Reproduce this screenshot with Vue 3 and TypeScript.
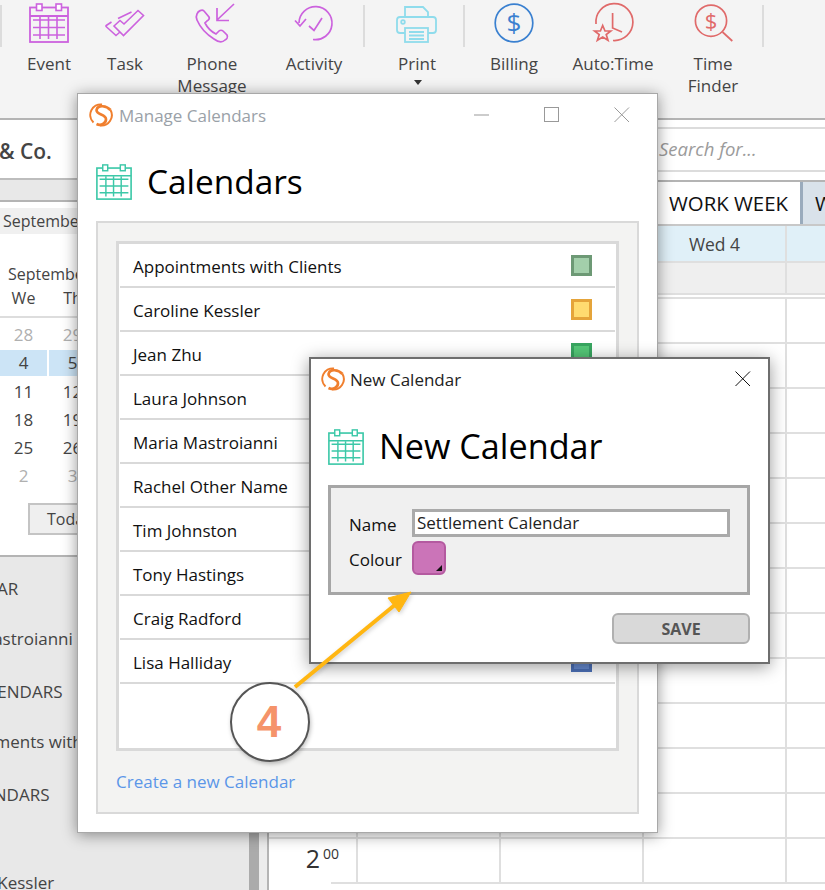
<script setup lang="ts">
interface Cal { name: string; fill: string; edge: string }
const calendars: Cal[] = [
  { name: 'Appointments with Clients', fill: '#a3cfab', edge: '#6d9975' },
  { name: 'Caroline Kessler', fill: '#ffdb70', edge: '#e5a43a' },
  { name: 'Jean Zhu', fill: '#55c878', edge: '#38a560' },
  { name: 'Laura Johnson', fill: '#eeeeee', edge: '#cccccc' },
  { name: 'Maria Mastroianni', fill: '#eeeeee', edge: '#cccccc' },
  { name: 'Rachel Other Name', fill: '#eeeeee', edge: '#cccccc' },
  { name: 'Tim Johnston', fill: '#eeeeee', edge: '#cccccc' },
  { name: 'Tony Hastings', fill: '#eeeeee', edge: '#cccccc' },
  { name: 'Craig Radford', fill: '#eeeeee', edge: '#cccccc' },
  { name: 'Lisa Halliday', fill: '#6a8fd6', edge: '#4d72ba' }
]
const dateRows = [
  { a: '28', b: '29', muted: true },
  { a: '4', b: '5', selected: true },
  { a: '11', b: '12' },
  { a: '18', b: '19' },
  { a: '25', b: '26' },
  { a: '2', b: '3', muted: true }
]
const hours = Array.from({ length: 13 }, (_, i) => i)
</script>

<template>
  <div class="app">
    <svg class="defs" width="0" height="0" aria-hidden="true">
      <symbol id="cal" viewBox="0 0 40 40">
        <rect x="1" y="4.5" width="38" height="34.5" fill="none" stroke="currentColor" stroke-width="1.8" />
        <path d="M1 13H39" stroke="currentColor" stroke-width="1.8" />
        <rect x="7.5" y="1" width="5.5" height="6.5" fill="#fff" stroke="currentColor" stroke-width="1.6" />
        <rect x="27" y="1" width="5.5" height="6.5" fill="#fff" stroke="currentColor" stroke-width="1.6" />
        <path d="M4 17H36M4 24.5H36M4 32H36M11 13.5V36M19.5 13.5V36M28 13.5V36" stroke="currentColor" stroke-width="1.6" fill="none" />
      </symbol>
      <symbol id="logo" viewBox="0 0 24 24">
        <path d="M13 1.5A10.5 10.5 0 0 0 4.5 19.5" fill="none" stroke="#f07f2e" stroke-width="2" />
        <path d="M11 22.5A10.5 10.5 0 0 0 21.5 7" fill="none" stroke="#f07f2e" stroke-width="2" />
        <path d="M21.5 7C17.5 2.5 9 1.5 7.6 6.8C6.6 12 17 11 17 16.2C17 20.5 12 23.2 7.5 21" fill="none" stroke="#f07f2e" stroke-width="2.7" />
      </symbol>
    </svg>

    <header class="toolbar">
      <div class="sep"></div>
      <div class="tool t-event">
        <svg class="ic-event" width="40" height="40"><use href="#cal" /></svg>
        <span>Event</span>
      </div>
      <div class="tool t-task">
        <svg width="42" height="40" viewBox="104 3 42 40" fill="none" stroke="#cc62de" stroke-width="1.6">
          <path d="M114 26L120 20.5L124 24L138 10.5L143.5 15.5L123.5 35.5Z" />
          <path d="M118 18.5L131.5 12M105.5 26L111.5 22M105.5 26L116 35.5L120 32" />
        </svg>
        <span>Task</span>
      </div>
      <div class="tool t-phone">
        <svg width="42" height="40" viewBox="191 3 42 40" fill="none" stroke="#cc62de" stroke-width="1.7">
          <path d="M197 14C198 11 202 9 204 11L209 17C210 19 209 20 207 21L205 23C207 27 212 32 216 34L219 31C220 30 222 30 223 31L227 35C228 37 227 39 225 40C222 43 218 42 214 39C206 34 200 27 197 20C196 18 196 16 197 14Z" />
          <path d="M234 4L217 20M217 8V20.5H229" />
        </svg>
        <span>Phone<br />Message</span>
      </div>
      <div class="tool t-activity">
        <svg width="42" height="40" viewBox="293 3 42 40" fill="none" stroke="#cc62de" stroke-width="1.7">
          <path d="M299 23A16.5 16.5 0 1 1 313 39.5" />
          <path d="M295 20.5L300 26L306 19M309 26L314 30.5L322 18" />
        </svg>
        <span>Activity</span>
      </div>
      <div class="sep"></div>
      <div class="tool t-print">
        <svg width="42" height="40" viewBox="396 3 42 40" fill="none" stroke="#8fdcec" stroke-width="1.8">
          <path d="M405 17V7H423L428 12V17" />
          <path d="M405 33H400C398 33 397 32 397 30V20C397 18 398 17 400 17H433C435 17 436 18 436 20V30C436 32 435 33 433 33H428" />
          <rect x="405" y="28" width="23" height="14" />
          <path d="M409 32H424M409 35.5H424M409 39H424" />
          <circle cx="403" cy="22" r="1.8" />
        </svg>
        <span>Print</span>
        <i class="caret"></i>
      </div>
      <div class="sep"></div>
      <div class="tool t-billing">
        <svg width="42" height="40" viewBox="493 3 42 40" fill="none">
          <circle cx="514" cy="23" r="18.8" stroke="#3a80d0" stroke-width="1.7" />
          <text x="514" y="32" text-anchor="middle" class="dollar" fill="#3a80d0">$</text>
        </svg>
        <span>Billing</span>
      </div>
      <div class="tool t-auto">
        <svg width="42" height="40" viewBox="592 3 42 40" fill="none" stroke="#e06a6a" stroke-width="1.7">
          <path d="M596 24A18.5 18.5 0 1 1 613 40.5" />
          <path d="M612.6 13V28L622 32" />
          <path d="M602.7 25.5L605 31H610.8L606.2 34.6L608 40.3L602.7 37L597.4 40.3L599.2 34.6L594.6 31H600.4Z" />
        </svg>
        <span>Auto:Time</span>
      </div>
      <div class="tool t-finder">
        <svg width="42" height="40" viewBox="692 3 42 40" fill="none">
          <circle cx="711" cy="20.7" r="15.6" stroke="#e06a6a" stroke-width="1.7" />
          <path d="M722.5 32L732.3 41" stroke="#e06a6a" stroke-width="1.7" />
          <text x="711" y="28.5" text-anchor="middle" class="dollar small" fill="#e06a6a">$</text>
        </svg>
        <span>Time<br />Finder</span>
      </div>
      <div class="sep"></div>
    </header>

    <main class="main">
      <aside class="side">
        <div class="firm">&amp; Co.</div>
        <div class="band"></div>
        <div class="month-bar">September 2019</div>
        <div class="month">
          <div class="month-title">September</div>
          <div class="cols head"><span>We</span><span>Th</span></div>
          <div
            v-for="r in dateRows"
            :key="r.a"
            class="cols date"
            :class="{ muted: r.muted, selected: r.selected }"
          >
            <span>{{ r.a }}</span><span>{{ r.b }}</span>
          </div>
          <button class="today">Today</button>
        </div>
        <div class="lists">
          <div class="li l1">MY CALENDAR</div>
          <div class="li l2">Maria Mastroianni</div>
          <div class="li l3">CALENDARS</div>
          <div class="li l4">Appointments with Clients</div>
          <div class="li l5">CALENDARS</div>
          <div class="li l6">Caroline Kessler</div>
        </div>
      </aside>
      <div class="splitter"></div>
      <section class="pane">
        <div class="search">Search for...</div>
        <div class="tabs">
          <div class="tab on">WORK WEEK</div>
          <div class="tab off">WEEK</div>
        </div>
        <div class="days">
          <div class="d-time"></div>
          <div class="d">Mon 2</div>
          <div class="d">Tue 3</div>
          <div class="d">Wed 4</div>
          <div class="d"></div>
        </div>
        <div class="allday">
          <div class="a-time"></div>
          <div class="a"></div>
          <div class="a"></div>
          <div class="a"></div>
          <div class="a"></div>
        </div>
        <div class="hours">
          <div v-for="h in hours" :key="h" class="row">
            <div class="h-time" :class="{ full: h % 2 === 1 }">
              <template v-if="h === 12">2<sup>00</sup></template>
            </div>
            <div class="h"></div>
            <div class="h"></div>
            <div class="h"></div>
            <div class="h"></div>
          </div>
        </div>
      </section>
    </main>

    <div class="win manage">
      <div class="titlebar">
        <svg class="logo" width="24" height="24"><use href="#logo" /></svg>
        <span class="wtitle">Manage Calendars</span>
        <div class="wctl">
          <svg width="16" height="16" viewBox="0 0 16 16"><path d="M0 8H15" stroke="#999" /></svg>
          <svg width="16" height="16" viewBox="0 0 16 16"><rect x=".5" y=".5" width="14" height="14" fill="none" stroke="#999" /></svg>
          <svg width="16" height="16" viewBox="0 0 16 16"><path d="M.5 .5L15 15M15 .5L.5 15" stroke="#999" /></svg>
        </div>
      </div>
      <div class="heading">
        <svg class="teal" width="36" height="36"><use href="#cal" /></svg>
        <h1>Calendars</h1>
      </div>
      <div class="panel">
        <ul class="list">
          <li v-for="c in calendars" :key="c.name">
            <span class="cname">{{ c.name }}</span>
            <i class="swatch" :style="{ background: c.fill, borderColor: c.edge }"></i>
          </li>
        </ul>
        <a class="create">Create a new Calendar</a>
      </div>
    </div>

    <div class="win newcal">
      <div class="titlebar nb">
        <svg class="logo" width="24" height="24"><use href="#logo" /></svg>
        <span class="wtitle dark">New Calendar</span>
        <svg class="nclose" width="16" height="16" viewBox="0 0 16 16"><path d="M.5 .5L15 15M15 .5L.5 15" stroke="#111" /></svg>
      </div>
      <div class="heading nh">
        <svg class="teal" width="36" height="36"><use href="#cal" /></svg>
        <h1>New Calendar</h1>
      </div>
      <div class="form">
        <label class="f-label">Name</label>
        <div class="f-input">Settlement Calendar</div>
        <label class="f-label">Colour</label>
        <div class="f-colour"><i></i></div>
      </div>
      <div class="actions"><button class="save">SAVE</button></div>
    </div>

    <svg class="arrow" width="825" height="890" viewBox="0 0 825 890" fill="none">
      <path d="M295 687L396 604" stroke="#ffb612" stroke-width="4" />
      <path d="M411 592L388 598L399 612Z" fill="#ffb612" stroke="#ffb612" />
    </svg>
    <div class="badge">4</div>
  </div>
</template>

<style scoped>
.app {
  position: relative;
  width: 825px;
  height: 890px;
  overflow: hidden;
  background: #fff;
  font-family: "Open Sans", "Noto Sans", sans-serif;
  color: #444;
}
.defs { position: absolute; }
.toolbar {
  display: flex;
  align-items: flex-start;
  height: 118px;
  background: #f4f4f4;
  border-bottom: 2px solid #b4b4b4;
}
.sep { flex: none; width: 2px; height: 42px; margin-top: 5px; background: #dcdcdc; }
.tool {
  flex: none;
  display: flex;
  flex-direction: column;
  align-items: center;
  padding-top: 3px;
  font-size: 17px;
  line-height: 22px;
  text-align: center;
  color: #444;
  white-space: nowrap;
}
.tool svg { display: block; margin-bottom: 10px; overflow: visible; }
.t-event { width: 94px; }
.ic-event { color: #cc62de; }
.t-task { width: 58px; }
.t-phone { width: 116px; }
.t-activity { width: 88px; margin-right: 5px; }
.t-print { width: 92px; margin-left: 6px; }
.t-billing { width: 98px; }
.t-auto { width: 100px; }
.t-finder { width: 100px; margin-right: -1px; }
.caret {
  width: 0; height: 0; margin-top: 5px; margin-left: 2px;
  border-left: 4px solid transparent;
  border-right: 4px solid transparent;
  border-top: 5px solid #333;
}
.dollar { font-family: "Open Sans", sans-serif; font-size: 26px; }
.dollar.small { font-size: 22px; }

.main { display: flex; height: 770px; }
.side {
  flex: none; width: 249px; height: 770px;
  display: flex; flex-direction: column;
  background: #fff; overflow: hidden;
}
.firm {
  height: 58px; line-height: 62px;
  font-size: 21px; font-weight: 600; color: #444;
  white-space: nowrap; margin-left: -1px;
  border-bottom: 2px solid #bdbdbd;
}
.band { height: 20px; background: #e8e8e8; border-bottom: 2px solid #b4b4b4; }
.month-bar {
  height: 26px; line-height: 26px; padding-left: 3px; margin-top: 6px;
  background: #f0f0f0; font-size: 16px; white-space: nowrap;
}
.month { flex: none; height: 323px; box-sizing: border-box; padding-top: 29px; border-bottom: 2px solid #b4b4b4; }
.month-title { font-size: 16px; line-height: 22px; padding-left: 8px; }
.cols { display: grid; grid-template-columns: repeat(5, 47px); column-gap: 2px; font-size: 17px; text-align: center; }
.cols span { display: block; }
.head { height: 31px; line-height: 26px; border-bottom: 2px solid #ddd; margin-bottom: 4px; font-size: 16px; }
.date { height: 26px; line-height: 26px; margin-bottom: 2.3px; }
.date.muted { color: #b0b0b0; }
.date.selected span { background: #cce4f6; }
.today {
  display: block; margin: 14px 0 0 28px; width: 120px; height: 32px;
  background: #efefef; border: 2px solid #c4c4c4; color: #444;
  font: 16px "Open Sans", sans-serif; text-align: left; padding-left: 17px;
}
.lists { flex: 1; background: #e8e8e8; overflow: hidden; font-size: 17px; color: #444; padding-top: 21px; }
.li { height: 22px; line-height: 22px; white-space: nowrap; }
.l1 { margin-left: -97px; }
.l2 { margin-top: 28px; margin-left: -72px; }
.l3 { margin-top: 31px; margin-left: -33px; }
.l4 { margin-top: 28px; margin-left: -68px; }
.l5 { margin-top: 31px; margin-left: -46px; }
.l6 { margin-top: 66px; margin-left: -73px; }

.splitter {
  flex: none; width: 10px; background: #ababab;
  margin-right: 8px;
  box-shadow: 8px 0 0 #ececec;
}
.pane {
  flex: 1; min-width: 0; display: flex; flex-direction: column;
  border-left: 2px solid #b4b4b4; overflow: hidden;
}
.search {
  height: 41px; margin-top: 7px; flex: none;
  border-top: 2px solid #dcdcdc; border-bottom: 2px solid #dcdcdc;
  padding-left: 390px; line-height: 40px;
  font-size: 18.5px; font-style: italic; color: #9b9b9b; white-space: nowrap;
}
.tabs {
  flex: none; height: 42px; margin-top: 8px;
  border-top: 2px solid #b4b4b4; border-bottom: 2px solid #c8c8c8;
  display: flex; justify-content: flex-end; overflow: hidden;
  font-size: 20.4px; color: #111; line-height: 43px; white-space: nowrap;
}
.tab.on { width: 146px; flex: none; box-sizing: border-box; text-align: center; background: #fff; border-right: 3px solid #9aabbc; }
.tab.off { width: 22px; flex: none; overflow: hidden; background: #d9e2ea; padding-left: 12px; box-sizing: border-box; }
.days, .allday, .row { display: flex; flex: none; }
.days { height: 35px; background: #e0f0f8; border-bottom: 2px solid #dfdfdf; line-height: 37px; font-size: 17.5px; text-align: center; }
.d-time, .a-time, .h-time { flex: none; width: 87px; }
.d, .a, .h { flex: none; width: 143px; box-sizing: border-box; border-left: 2px solid #dfdfdf; }
.allday { height: 30px; background: #efefef; border-bottom: 2px solid #dfdfdf; margin-bottom: 2px; }
.hours { border-top: 2px solid #dfdfdf; }
.row { height: 45px; box-sizing: border-box; }
.h { border-bottom: 2px solid #dfdfdf; }
.h-time {
  box-sizing: border-box;
  text-align: right; padding-right: 17px;
  font-size: 25px; line-height: 38px; color: #333;
  background: linear-gradient(#dfdfdf, #dfdfdf) no-repeat right bottom / 25px 2px;
}
.h-time.full { background-size: 100% 2px; }
.h-time sup { font-size: 14px; vertical-align: 9px; line-height: 0; margin-left: 3px; }

.win { position: absolute; box-sizing: border-box; background: #fff; }
.manage {
  left: 77px; top: 93px; width: 581px; height: 740px;
  border: 1px solid #a8a8a8;
  box-shadow: 0 2px 14px rgba(0,0,0,.42);
  display: flex; flex-direction: column;
}
.titlebar { display: flex; align-items: center; height: 42px; flex: none; padding-left: 11px; }
.logo { flex: none; margin-right: 6px; }
.wtitle { font-size: 17px; color: #9aa1a8; white-space: nowrap; }
.wtitle.dark { color: #222; }
.wctl { margin-left: auto; display: flex; gap: 54px; padding-right: 27px; }
.wctl svg { display: block; }
.heading { display: flex; align-items: center; height: 62px; padding-left: 18px; flex: none; margin-top: 15px; }
.teal { color: #3cc8a8; flex: none; margin-right: 15px; }
h1 { margin: -2px 0 0; font-weight: 400; color: #000; font-size: 33.4px; white-space: nowrap; }
.panel {
  margin: 8px 18px 18px; flex: 1; box-sizing: border-box;
  background: #f3f3f2; border: 2px solid #d9d9d9;
  padding: 18px 18px 0; display: flex; flex-direction: column;
}
.list {
  list-style: none; margin: 0; padding: 0 1px; height: 510px; box-sizing: border-box;
  background: #fff; border: 3px solid #d9d9d9; flex: none;
}
.list li {
  height: 44px; box-sizing: border-box; border-bottom: 2px solid #d9d9d9;
  display: flex; align-items: center; justify-content: space-between;
  padding: 0 23px 0 13px; font-size: 17px; color: #111;
}
.cname { padding-top: 2px; }
.swatch { width: 21px; height: 21px; box-sizing: border-box; border: 3px solid; display: block; }
.create { margin-top: 19px; font-size: 17px; color: #5b96e8; }

.newcal {
  left: 309px; top: 357px; width: 461px; height: 307px;
  border: 2px solid #6e6e6e;
  box-shadow: 0 3px 16px rgba(0,0,0,.4);
  display: flex; flex-direction: column;
}
.nb { height: 40px; padding-left: 10px; }
.nb .logo { margin-right: 5px; }
.nclose { margin-left: auto; margin-right: 17px; }
.nh { margin-top: 25px; padding-left: 17px; height: 46px; }
.nh h1 { font-size: 34.2px; margin-top: -4px; }
.form {
  margin: 15px 18px 0 17px; height: 110px; box-sizing: border-box;
  background: #f0f0f0; border: 3px solid #a6a6a6;
  display: grid; grid-template-columns: 63px 318px;
  grid-template-rows: 28px 34px; row-gap: 4px;
  padding: 21px 0 0 18px; align-items: center; flex: none;
}
.f-label { font-size: 17px; color: #111; padding-top: 2px; }
.f-input {
  height: 28px; box-sizing: border-box; background: #fff; border: 3px solid #aaa;
  font-size: 17px; line-height: 22px; padding-left: 2px; color: #222; white-space: nowrap;
}
.f-colour {
  position: relative; width: 34px; height: 34px; box-sizing: border-box;
  background: #cb74b8; border: 2px solid #b45aa0; border-radius: 6px;
}
.f-colour i {
  position: absolute; right: 2px; bottom: 2px; width: 0; height: 0;
  border-left: 6px solid transparent; border-bottom: 6px solid #111;
}
.actions { display: flex; justify-content: flex-end; margin: 18px 18px 0 0; }
.save {
  width: 138px; height: 31px; background: #d9d9d9; border: 2px solid #b0b0b0; border-radius: 6px;
  font: 700 16px "Open Sans", sans-serif; color: #555; padding: 0;
}

.arrow { position: absolute; left: 0; top: 0; pointer-events: none; filter: drop-shadow(1px 2px 2px rgba(0,0,0,.18)); }
.badge {
  position: absolute; left: 230px; top: 682px; width: 80px; height: 80px; box-sizing: border-box;
  border: 2px solid #555; border-radius: 50%; background: #fff;
  box-shadow: 1px 2px 4px rgba(0,0,0,.25);
  display: flex; align-items: center; justify-content: center; padding-right: 2px;
  font: 700 44px "Liberation Sans", sans-serif; color: #f5936a;
}
</style>
